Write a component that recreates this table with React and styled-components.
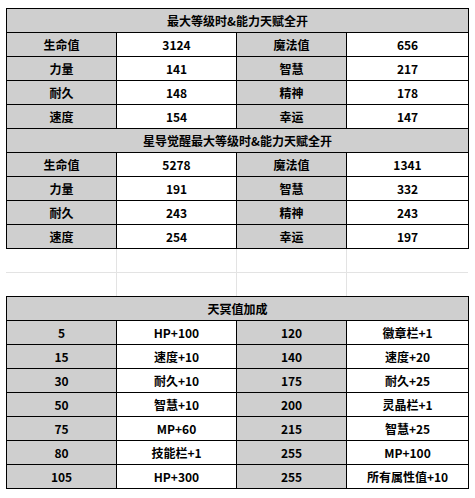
import React from 'react';
import styled, { createGlobalStyle } from 'styled-components';

const GlobalStyle = createGlobalStyle`
  html, body {
    margin: 0;
    padding: 0;
    background: #fff;
  }
  body {
    font-family: "Noto Sans CJK SC", "Noto Sans", sans-serif;
    color: #000;
  }
`;

const Sheet = styled.div`
  padding: 8px 0 0 6px;
`;

const Table = styled.table`
  border-collapse: collapse;
  table-layout: fixed;
  width: 462px;
`;

const Cell = styled.td`
  height: 23px;
  padding: 0;
  border: 1px solid #000;
  background: ${(p) => (p.$grey ? '#cfcfcf' : '#fff')};
  font-size: 12px;
  font-weight: 700;
  line-height: 23px;
  text-align: center;
  white-space: nowrap;
`;

const Header = styled(Cell)`
  background: #cfcfcf;
`;

const BlankCell = styled.td`
  height: 23px;
  padding: 0;
  border-right: ${(p) => (p.$last ? 'none' : '1px solid #e3e3e3')};
  border-bottom: ${(p) => (p.$top ? '1px solid #e3e3e3' : 'none')};
`;

const Cols = () => (
  <colgroup>
    <col style={{ width: 110 }} />
    <col style={{ width: 120 }} />
    <col style={{ width: 110 }} />
    <col style={{ width: 122 }} />
  </colgroup>
);

const maxStats = [
  ['生命值', '3124', '魔法值', '656'],
  ['力量', '141', '智慧', '217'],
  ['耐久', '148', '精神', '178'],
  ['速度', '154', '幸运', '147'],
];

const awakenStats = [
  ['生命值', '5278', '魔法值', '1341'],
  ['力量', '191', '智慧', '332'],
  ['耐久', '243', '精神', '243'],
  ['速度', '254', '幸运', '197'],
];

const bonus = [
  ['5', 'HP+100', '120', '徽章栏+1'],
  ['15', '速度+10', '140', '速度+20'],
  ['30', '耐久+10', '175', '耐久+25'],
  ['50', '智慧+10', '200', '灵晶栏+1'],
  ['75', 'MP+60', '215', '智慧+25'],
  ['80', '技能栏+1', '255', 'MP+100'],
  ['105', 'HP+300', '255', '所有属性值+10'],
];

const Row = ({ row }) => (
  <tr>
    {row.map((v, i) => (
      <Cell key={i} $grey={i % 2 === 0}>
        {v}
      </Cell>
    ))}
  </tr>
);

const Section = ({ title, rows }) => (
  <>
    <tr>
      <Header colSpan={4}>{title}</Header>
    </tr>
    {rows.map((r, i) => (
      <Row key={i} row={r} />
    ))}
  </>
);

const App = () => (
  <Sheet>
    <GlobalStyle />
    <Table>
      <Cols />
      <tbody>
        <Section title="最大等级时&能力天赋全开" rows={maxStats} />
        <Section title="星导觉醒最大等级时&能力天赋全开" rows={awakenStats} />
      </tbody>
    </Table>
    <Table>
      <Cols />
      <tbody>
        <tr>
          {[0, 1, 2, 3].map((i) => (
            <BlankCell key={i} $top $last={i === 3} />
          ))}
        </tr>
        <tr>
          {[0, 1, 2, 3].map((i) => (
            <BlankCell key={i} $last={i === 3} />
          ))}
        </tr>
      </tbody>
    </Table>
    <Table>
      <Cols />
      <tbody>
        <Section title="天冥值加成" rows={bonus} />
      </tbody>
    </Table>
  </Sheet>
);

export default App;
